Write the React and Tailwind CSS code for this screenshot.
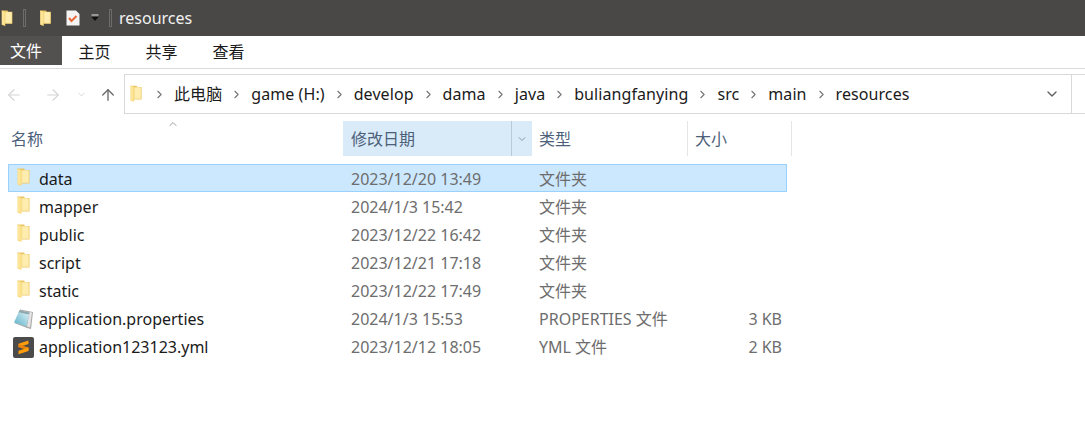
import { ArrowLeft, ArrowRight, ArrowUp, ChevronDown, ChevronRight, ChevronUp } from "lucide-react";

const FONT = "font-['Noto_Sans','Noto_Sans_CJK_SC',sans-serif]";

function Folder({ className }) {
  return (
    <svg viewBox="0 0 13 18" className={className}>
      <path d="M0.500 0.500h6.500l1 1.500h4.500v13.500h-8z" fill="#e9c566" />
      <path d="M4 2.500h8v12.500h-8z" fill="#fbe49a" />
      <path d="M5.500 2.500h5.500v11.500h-5.500z" fill="#ffedb0" />
      <path d="M0.500 0.500l4 1.500v16l-4-1.500z" fill="#f9d97c" />
      <path d="M1 1l2.500 1v14.500l-2.500-1z" fill="#fde59a" />
    </svg>
  );
}

function PropsIcon() {
  return (
    <svg viewBox="0 0 21 21" className="w-[21px] h-[21px] shrink-0">
      <defs>
        <linearGradient id="pad" x1="1" y1="0" x2="0" y2="1">
          <stop offset="0" stopColor="#e6f6fa" />
          <stop offset="1" stopColor="#59afc8" />
        </linearGradient>
      </defs>
      <path d="M7 0.500l13 2.500-2 17-4-1-12.500-5z" fill="#a8a8a8" />
      <path d="M16.500 3l2.500 0.500-2 15-3-1z" fill="#e4e4e4" />
      <path d="M6.500 1.500l10 2-3 14-12.500-4z" fill="url(#pad)" />
      <path d="M6.500 1.500l10 2-0.500 2-10.500-2.200z" fill="#8fa6ac" />
    </svg>
  );
}

function SublimeIcon() {
  return (
    <svg viewBox="0 0 21 21" className="w-[21px] h-[21px] shrink-0">
      <rect width="21" height="21" rx="2" fill="#4b4b4b" />
      <path d="M15.500 3.500v3.500l-10 3.300v-3.500z" fill="#ff9d0a" />
      <path d="M5.500 10.300v-3l10 3.300v3z" fill="#e8820c" />
      <path d="M15.500 10.400v3.500l-10 3.300v-3.500z" fill="#ff9d0a" />
    </svg>
  );
}

const files = [
  { name: "data", date: "2023/12/20 13:49", type: "文件夹", selected: true },
  { name: "mapper", date: "2024/1/3 15:42", type: "文件夹" },
  { name: "public", date: "2023/12/22 16:42", type: "文件夹" },
  { name: "script", date: "2023/12/21 17:18", type: "文件夹" },
  { name: "static", date: "2023/12/22 17:49", type: "文件夹" },
  { name: "application.properties", date: "2024/1/3 15:53", type: "PROPERTIES 文件", size: "3 KB", icon: "props" },
  { name: "application123123.yml", date: "2023/12/12 18:05", type: "YML 文件", size: "2 KB", icon: "sublime" },
];

const crumbs = ["此电脑", "game (H:)", "develop", "dama", "java", "buliangfanying", "src", "main", "resources"];

export default function App() {
  return (
    <div className={`${FONT} w-[1085px] h-[436px] overflow-hidden bg-white text-[16px] text-[#1a1a1a]`}>
      {/* title bar */}
      <div className="h-9 bg-[#4a4846] flex items-center text-[#f2f2f2]">
        <Folder className="w-[12px] h-[16px] ml-px" />
        <div className="w-[3px] h-[18px] ml-[10px] border border-[#6e6c6a]" />
        <Folder className="w-[13px] h-[16px] ml-[13px]" />
        <svg viewBox="0 0 14 16" className="w-[14px] h-4 ml-[14px]">
          <path d="M0.500 0.500h9.500l3.500 3.500v11.500h-13z" fill="#f4f4f4" />
          <path d="M3 8l2.500 3 5-5" fill="none" stroke="#e8683a" strokeWidth="2" />
        </svg>
        <svg viewBox="0 0 8 8" className="w-2 h-2 ml-[11px]">
          <path d="M0.500 0.500h7v1h-7z" fill="#e8e8e8" />
          <path d="M0.500 3h7l-3.500 4z" fill="#111" />
        </svg>
        <div className="w-[3px] h-[18px] ml-[10px] border border-[#6e6c6a]" />
        <span className="ml-[7px]">resources</span>
      </div>

      {/* ribbon tabs */}
      <div className="h-[33px] border-b border-[#dadada] flex items-start">
        <div className="w-[62px] h-[29px] bg-[#53514f] text-white flex items-center pl-[10px]">文件</div>
        <div className="w-[67px] h-[33px] pb-[2px] pr-[2px] flex items-center justify-center">主页</div>
        <div className="w-[67px] h-[33px] pb-[2px] pr-[2px] flex items-center justify-center">共享</div>
        <div className="w-[67px] h-[33px] pb-[2px] pr-[2px] flex items-center justify-center">查看</div>
      </div>

      {/* address row */}
      <div className="h-10 mt-[5px] flex items-stretch">
        <div className="w-[124px] flex items-center text-[#d4d4d4] pl-[5px] pt-px">
          <ArrowLeft size={18} strokeWidth={1.500} />
          <ArrowRight size={18} strokeWidth={1.500} className="ml-[21px]" />
          <ChevronDown size={11} strokeWidth={2} className="ml-[14px]" />
          <ArrowUp size={18} strokeWidth={1.800} className="ml-3 text-[#6b6b6b]" />
        </div>
        <div className="flex-1 flex items-stretch border border-r-0 border-[#d9d9d9]">
          <div className="w-[947px] border-r border-[#d9d9d9] flex items-center pl-[5px] pr-[11px] tracking-[0.005em]">
            <Folder className="w-[12px] h-[17px] mb-[2px] mr-[3px]" />
            {crumbs.map((c) => (
              <div key={c} className="flex items-center">
                <ChevronRight size={13} strokeWidth={2} className="mx-2 text-[#757575]" />
                <span className="whitespace-nowrap">{c}</span>
              </div>
            ))}
            <ChevronDown size={16} strokeWidth={2} className="ml-auto text-[#5f5f5f]" />
          </div>
        </div>
      </div>

      {/* column headers */}
      <div className="relative h-[35px] mt-[7px] ml-[8px] flex text-[#4c607a]">
        <ChevronUp size={12} strokeWidth={1.500} className="absolute left-[159px] -top-[3px] text-[#7a7a7a]" />
        <div className="w-[335px] flex items-center pl-[3px]">名称</div>
        <div className="w-[189px] bg-[#d9ebf9] flex items-center">
          <div className="flex-1 pl-2">修改日期</div>
          <div className="w-[21px] h-full border-l border-[#b5cbdc] flex items-center justify-center">
            <ChevronDown size={12} strokeWidth={1.500} className="text-[#6f7f8c]" />
          </div>
        </div>
        <div className="w-[156px] border-r border-[#e5e5e5] flex items-center pl-[7px]">类型</div>
        <div className="w-[104px] border-r border-[#e5e5e5] flex items-center pl-[7px]">大小</div>
      </div>

      {/* file rows */}
      <div className="mt-2 ml-[8px] w-[779px] flex flex-col">
        {files.map((f) => (
          <div
            key={f.name}
            className={`h-7 flex items-center border pt-[2px] ${f.selected ? "bg-[#cce8ff] border-[#99d1ff]" : "border-transparent"}`}
          >
            <div className="w-[335px] flex items-center pl-[4px]">
              <div className="w-[21px] flex justify-center">
                {f.icon === "props" ? <PropsIcon /> : f.icon === "sublime" ? <SublimeIcon /> : <Folder className="w-[13px] h-[18px] mb-[4px]" />}
              </div>
              <span className="ml-[5px]">{f.name}</span>
            </div>
            <div className="w-[188px] pl-[7px] text-[#6d6d6d]">{f.date}</div>
            <div className="w-[150px] pl-[7px] text-[#6d6d6d]">{f.type}</div>
            <div className="flex-1 text-right pr-1 text-[#6d6d6d]">{f.size}</div>
          </div>
        ))}
      </div>
    </div>
  );
}
